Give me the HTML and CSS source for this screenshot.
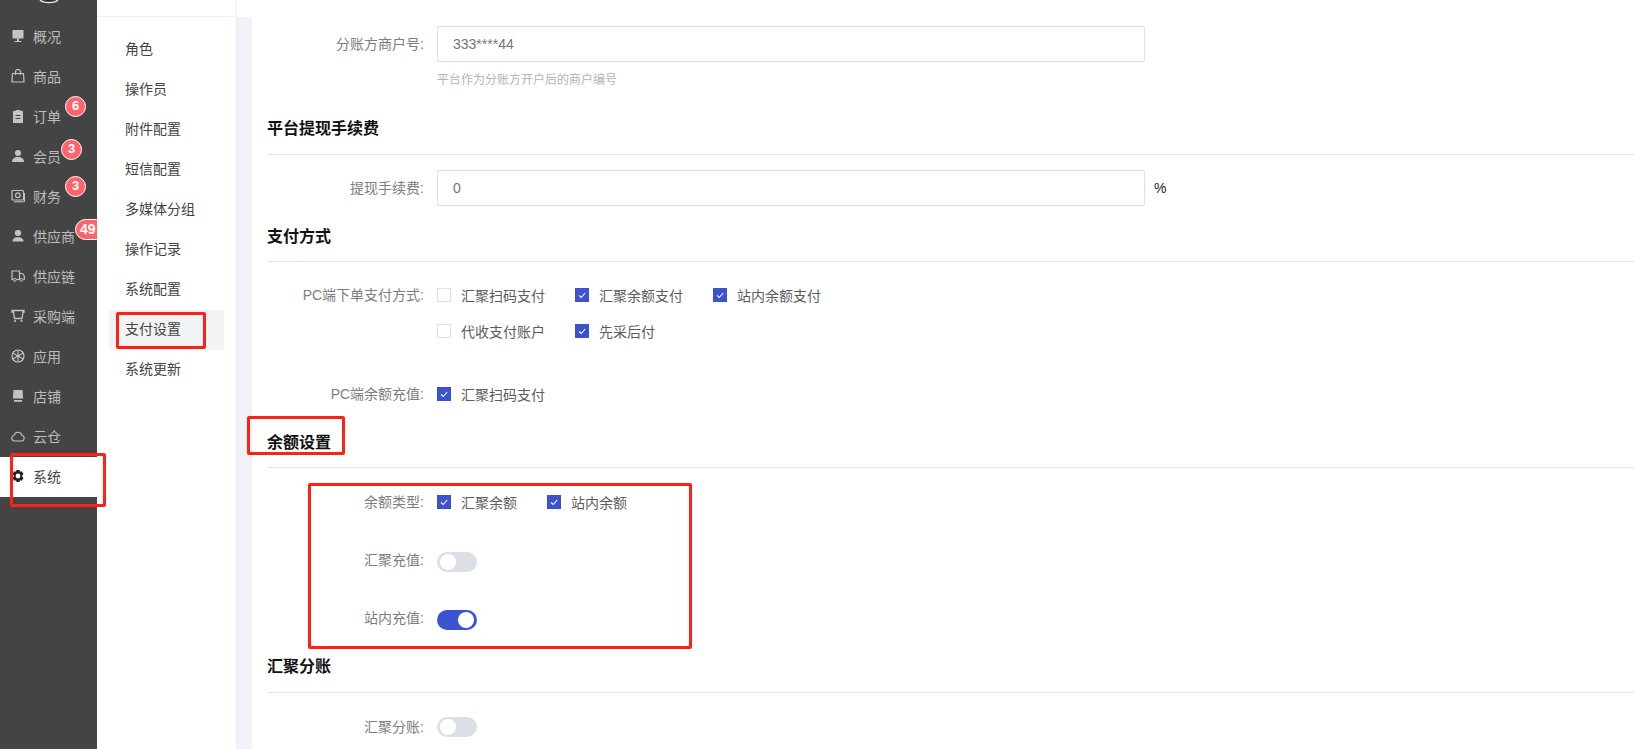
FILE: index.html
```html
<!DOCTYPE html>
<html lang="zh-CN">
<head>
<meta charset="utf-8">
<title>支付设置</title>
<link rel="stylesheet" href="styles.css">
</head>
<body>
<div class="app">
  <nav class="sidebar">
    <div class="logo"><svg width="20" height="4" viewBox="0 0 20 4"><path d="M1 0c3 3.4 15 3.4 18 0" fill="none" stroke="#e8e8e8" stroke-width="1.4"/><path d="M5 0c3 2 7 2 10 0z" fill="#2b2b2b"/></svg></div>
    <a class="nav-item"><svg class="ico" viewBox="0 0 14 14"><path d="M1.500 1h11v8.500h-11z" fill="currentColor"/><path d="M6 9.500h2V12h2.500v1h-7v-1H6z" fill="currentColor"/></svg><span>概况</span></a>
    <a class="nav-item"><svg class="ico" viewBox="0 0 14 14"><path d="M1.500 4.500h11l.5 8.500H1z" fill="none" stroke="currentColor" stroke-width="1.200"/><path d="M4.500 6V3a2.500 2.500 0 0 1 5 0v3" fill="none" stroke="currentColor" stroke-width="1.200"/></svg><span>商品</span></a>
    <a class="nav-item"><svg class="ico" viewBox="0 0 14 14"><path fill-rule="evenodd" d="M2 2h2.500V1h5v1H12v12H2zM4.500 6v1h5V6zm0 3v1h5V9z" fill="currentColor"/></svg><span>订单</span><b class="badge badge-order">6</b></a>
    <a class="nav-item"><svg class="ico" viewBox="0 0 14 14"><circle cx="7" cy="4" r="3" fill="currentColor"/><path d="M1 13c0-3.200 2.500-5 6-5s6 1.800 6 5z" fill="currentColor"/></svg><span>会员</span><b class="badge badge-member">3</b></a>
    <a class="nav-item"><svg class="ico" viewBox="0 0 14 14"><rect x="1" y="1.500" width="11.500" height="9.500" rx="1" fill="none" stroke="currentColor" stroke-width="1.200"/><circle cx="6.800" cy="6.200" r="2.300" fill="none" stroke="currentColor" stroke-width="1.200"/><path d="M3 12.800h10.500V4" fill="none" stroke="currentColor"/></svg><span>财务</span><b class="badge badge-finance">3</b></a>
    <a class="nav-item"><svg class="ico" viewBox="0 0 14 14"><ellipse cx="7" cy="4" rx="3.200" ry="3" fill="currentColor"/><path d="M1.500 12.500c0-2.800 2.300-4.200 5.500-4.200s5.500 1.400 5.500 4.200z" fill="currentColor"/></svg><span>供应商</span><b class="badge badge-supplier">49</b></a>
    <a class="nav-item"><svg class="ico" viewBox="0 0 14 14"><path d="M2.500 10.500H1V2h7.500v8.500H5M8.500 4.500h3l1.800 2.500v3.500h-1" fill="none" stroke="currentColor" stroke-width="1.200"/><circle cx="3.800" cy="10.800" r="1.500" fill="none" stroke="currentColor"/><circle cx="10.300" cy="10.800" r="1.500" fill="none" stroke="currentColor"/></svg><span>供应链</span></a>
    <a class="nav-item"><svg class="ico" viewBox="0 0 14 14"><path d="M1 1.500h12V3h-1l-1 6.500H3.500L2.500 3H1z" fill="none" stroke="currentColor" stroke-width="1.300"/><circle cx="4" cy="12" r="1.100" fill="currentColor"/><circle cx="10.500" cy="12" r="1.100" fill="currentColor"/></svg><span>采购端</span></a>
    <a class="nav-item"><svg class="ico" viewBox="0 0 14 14"><circle cx="7" cy="7" r="6" fill="none" stroke="currentColor" stroke-width="1.200"/><circle cx="7" cy="7" r="1.300" fill="currentColor"/><path d="M7 1v12M1.800 4l10.400 6M1.800 10l10.400-6" stroke="currentColor" stroke-width="1.100"/></svg><span>应用</span></a>
    <a class="nav-item"><svg class="ico" viewBox="0 0 14 14"><path d="M2.500 1h9l.7 8.500H1.800z" fill="currentColor"/><path d="M3 11h8v1.800H3z" fill="currentColor"/></svg><span>店铺</span></a>
    <a class="nav-item"><svg class="ico" viewBox="0 0 14 14"><path d="M3.500 12h7a2.800 2.800 0 0 0 .6-5.500A4.200 4.200 0 0 0 3 6.300 2.900 2.900 0 0 0 3.500 12z" fill="none" stroke="currentColor" stroke-width="1.100"/></svg><span>云仓</span></a>
    <a class="nav-item nav-item-active"><svg class="ico" viewBox="0 0 14 14"><path fill-rule="evenodd" d="M5.500 1h3l.5 1.700 1.700-.5L12.500 5l-1.200 1.200v1.600L12.500 9l-1.800 2.800-1.700-.5-.5 1.700h-3L5 11.300l-1.700.5L1.500 9l1.200-1.200V6.200L1.500 5l1.800-2.800 1.700.5zM7 4.600a2.400 2.400 0 1 0 0 4.800 2.400 2.400 0 0 0 0-4.800z" fill="currentColor"/></svg><span>系统</span></a>
  </nav>

  <aside class="submenu">
    <div class="submenu-head"></div>
    <ul class="submenu-list">
      <li class="submenu-item">角色</li>
      <li class="submenu-item">操作员</li>
      <li class="submenu-item">附件配置</li>
      <li class="submenu-item">短信配置</li>
      <li class="submenu-item">多媒体分组</li>
      <li class="submenu-item">操作记录</li>
      <li class="submenu-item">系统配置</li>
      <li class="submenu-item submenu-item-active">支付设置</li>
      <li class="submenu-item">系统更新</li>
    </ul>
  </aside>

  <div class="right">
    <div class="topbar"></div>
    <div class="band">
      <main class="card">
        <div class="row row-input">
          <label class="label">分账方商户号:</label>
          <input class="input" readonly value="333****44">
        </div>
        <p class="hint">平台作为分账方开户后的商户编号</p>

        <h2 class="title title-fee">平台提现手续费</h2>
        <div class="row row-input row-fee">
          <label class="label">提现手续费:</label>
          <input class="input" readonly value="0">
          <span class="unit">%</span>
        </div>

        <h2 class="title title-pay">支付方式</h2>
        <div class="row row-start row-pay">
          <label class="label">PC端下单支付方式:</label>
          <div class="checks checks-wrap">
            <span class="check"><i class="box"></i>汇聚扫码支付</span>
            <span class="check"><i class="box on"><svg viewBox="0 0 14 14"><path d="M4 7.300l2.200 2.200L10.200 5" fill="none" stroke="#fff" stroke-width="1.100"/></svg></i>汇聚余额支付</span>
            <span class="check"><i class="box on"><svg viewBox="0 0 14 14"><path d="M4 7.300l2.200 2.200L10.200 5" fill="none" stroke="#fff" stroke-width="1.100"/></svg></i>站内余额支付</span>
            <span class="check"><i class="box"></i>代收支付账户</span>
            <span class="check"><i class="box on"><svg viewBox="0 0 14 14"><path d="M4 7.300l2.200 2.200L10.200 5" fill="none" stroke="#fff" stroke-width="1.100"/></svg></i>先采后付</span>
          </div>
        </div>
        <div class="row row-recharge">
          <label class="label">PC端余额充值:</label>
          <div class="checks">
            <span class="check"><i class="box on"><svg viewBox="0 0 14 14"><path d="M4 7.300l2.200 2.200L10.200 5" fill="none" stroke="#fff" stroke-width="1.100"/></svg></i>汇聚扫码支付</span>
          </div>
        </div>

        <h2 class="title title-balance">余额设置</h2>
        <div class="row row-type">
          <label class="label">余额类型:</label>
          <div class="checks">
            <span class="check"><i class="box on"><svg viewBox="0 0 14 14"><path d="M4 7.300l2.200 2.200L10.200 5" fill="none" stroke="#fff" stroke-width="1.100"/></svg></i>汇聚余额</span>
            <span class="check"><i class="box on"><svg viewBox="0 0 14 14"><path d="M4 7.300l2.200 2.200L10.200 5" fill="none" stroke="#fff" stroke-width="1.100"/></svg></i>站内余额</span>
          </div>
        </div>
        <div class="row row-switch">
          <label class="label">汇聚充值:</label>
          <span class="switch"></span>
        </div>
        <div class="row row-switch">
          <label class="label">站内充值:</label>
          <span class="switch switch-on"></span>
        </div>

        <h2 class="title title-split">汇聚分账</h2>
        <div class="row row-split">
          <label class="label">汇聚分账:</label>
          <span class="switch"></span>
        </div>
      </main>
    </div>
  </div>
</div>

<div class="mark mark-nav"></div>
<div class="mark mark-sub"></div>
<div class="mark mark-title"></div>
<div class="mark mark-form"></div>
</body>
</html>
```

FILE: styles.css
```css
* { box-sizing: border-box; }
html, body { margin: 0; padding: 0; height: 749px; overflow: hidden; background: #fff; }
body { font-family: "Liberation Sans", "Noto Sans CJK SC", sans-serif; font-size: 14px; color: #515a6e; position: relative; }
.app { display: flex; height: 749px; }

.sidebar { width: 97px; flex: none; background: #444; overflow: hidden; color: #bdbdbd; }
.logo { height: 17px; display: flex; justify-content: center; align-items: flex-start; }
.logo svg { display: block; }
.nav-item { position: relative; display: flex; align-items: center; height: 40px; padding: 0 0 2px 11px; }
.nav-item .ico { width: 14px; height: 14px; flex: none; margin-right: 8px; color: #c4c4c4; }
.nav-item-active { background: #fff; color: #444; }
.nav-item-active .ico { color: #222; }
.badge { position: absolute; height: 21px; min-width: 21px; padding: 0 5px; border: 1px solid #fff; border-radius: 11px; background: #ff646d; color: #fff; font-size: 13px; font-weight: 700; line-height: 18px; text-align: center; }
.badge-order { left: 65px; top: -1px; }
.badge-member { left: 61px; top: 2px; }
.badge-finance { left: 65px; top: -1px; }
.badge-supplier { left: 75px; top: 2px; min-width: 32px; padding: 0 8px 0 4px; text-align: left; font-size: 14px; }

.submenu { width: 139px; flex: none; padding: 0 12px; position: relative; }
.submenu-head { height: 17px; margin: 0 -12px; border-bottom: 1px solid #eef0f5; }
.submenu-list { list-style: none; margin: 13px 0 0; padding: 0; }
.submenu-item { height: 40px; line-height: 38px; padding-left: 16px; color: #444; }
.submenu-item-active { background: #f2f3f5; border-radius: 2px; }

.right { flex: 1; min-width: 0; display: flex; flex-direction: column; border-left: 1px solid #eef0f5; }
.topbar { height: 17px; flex: none; background: #fff; }
.band { flex: 1; background: #f0f2f7; padding-left: 15px; min-height: 0; overflow: hidden; }
.card { height: 100%; background: #fff; padding: 9px 0 0 15px; }

.row { display: flex; align-items: center; height: 36px; }
.row-start { align-items: flex-start; height: auto; }
.label { width: 157px; flex: none; margin-right: 13px; text-align: right; color: #7d7d7d; line-height: 36px; white-space: nowrap; }
.input { width: 708px; height: 36px; flex: none; border: 1px solid #dfe0e6; border-radius: 1px; padding: 0 15px; font: inherit; color: #757575; outline: none; background: #fff; }
.unit { margin-left: 9px; color: #222; }
.hint { margin: 9px 0 0 170px; font-size: 12px; line-height: 18px; color: #b4b4b4; }

.title { margin: 0; line-height: 24px; font-size: 16px; font-weight: 700; color: #111; border-bottom: 1px solid #e2e3e8; }
.title-fee { margin-top: 28px; height: 38px; }
.row-fee { margin-top: 15px; }
.title-pay { margin-top: 19px; height: 37px; }
.row-pay { margin-top: 15px; }
.row-recharge { margin-top: 27px; }
.title-balance { margin-top: 19px; height: 37px; }
.row-type { margin-top: 16px; }
.row-switch { margin-top: 22px; }
.row-switch .switch { margin-top: 4px; }
.title-split { margin-top: 19px; height: 38px; }
.row-split { margin-top: 16px; }

.checks { display: flex; }
.checks-wrap { flex-wrap: wrap; width: 420px; }
.check { display: inline-flex; align-items: center; height: 36px; margin-right: 30px; color: #5c5c5c; white-space: nowrap; }
.box { display: block; width: 14px; height: 14px; margin-right: 10px; border: 1px solid #dfe0e6; flex: none; background: #fff; }
.box.on { background: #3d52cf; border-color: #3d52cf; position: relative; }
.box svg { display: block; position: absolute; left: -1px; top: -1px; width: 14px; height: 14px; }

.switch { position: relative; display: block; width: 40px; height: 20px; border-radius: 10px; background: #dcdfe6; flex: none; }
.switch::after { content: ""; position: absolute; left: 3px; top: 2px; width: 16px; height: 16px; border-radius: 50%; background: #fff; }
.switch-on { background: #3d52cf; }
.switch-on::after { left: 21px; }

.mark { position: absolute; border: 3px solid #ff2016; border-radius: 2px; pointer-events: none; }
.mark-nav { left: 10px; top: 453px; width: 96px; height: 54px; }
.mark-sub { left: 116px; top: 312px; width: 90px; height: 37px; }
.mark-title { left: 247px; top: 416px; width: 98px; height: 39px; }
.mark-form { left: 308px; top: 483px; width: 384px; height: 166px; }
```
